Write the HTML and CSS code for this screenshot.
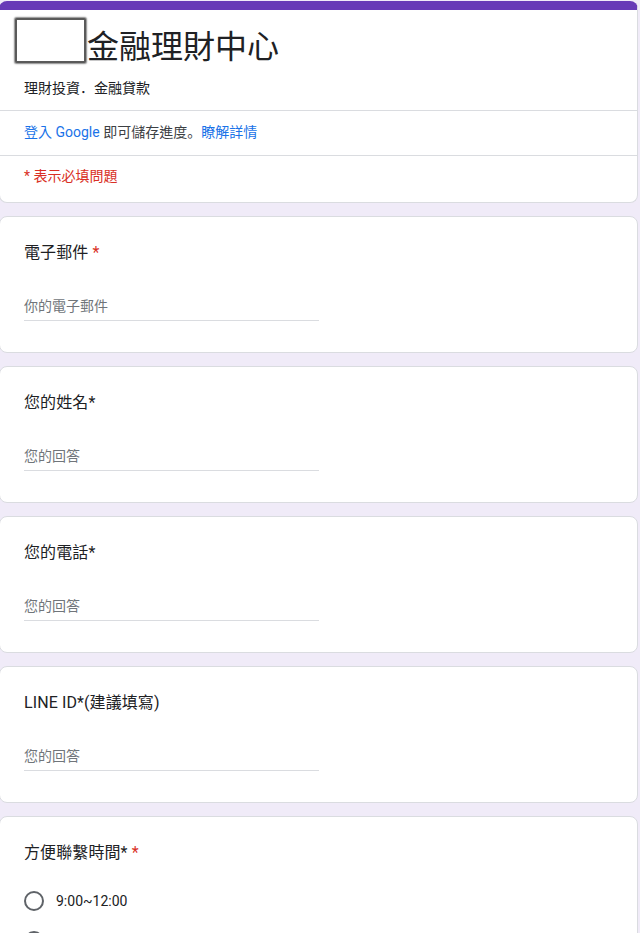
FILE: index.html
```html
<!DOCTYPE html>
<html lang="zh-Hant">
<head>
<meta charset="utf-8">
<title>金融理財中心</title>
<link rel="stylesheet" href="styles.css">
</head>
<body>
<div class="page">
  <div class="card head">
    <div class="head-main">
      <div class="title-row">
        <div class="logo"></div>
        <h1 class="title">金融理財中心</h1>
      </div>
      <div class="desc">理財投資<span class="jp" lang="ja">．</span>金融貸款</div>
    </div>
    <div class="head-row login"><a class="link">登入 Google</a> 即可儲存進度<span class="jp" lang="ja">。</span><a class="link">瞭解詳情</a></div>
    <div class="head-row req">* 表示必填問題</div>
  </div>

  <div class="card q">
    <div class="q-title">電子郵件 <span class="star">*</span></div>
    <div class="answer">你的電子郵件</div>
  </div>

  <div class="card q">
    <div class="q-title">您的姓名*</div>
    <div class="answer">您的回答</div>
  </div>

  <div class="card q">
    <div class="q-title">您的電話*</div>
    <div class="answer">您的回答</div>
  </div>

  <div class="card q">
    <div class="q-title">LINE ID*(建議填寫)</div>
    <div class="answer">您的回答</div>
  </div>

  <div class="card q">
    <div class="q-title">方便聯繫時間* <span class="star">*</span></div>
    <div class="options">
      <div class="opt"><span class="radio"></span><span class="opt-label">9:00~12:00</span></div>
      <div class="opt"><span class="radio"></span><span class="opt-label">12:00~15:00</span></div>
      <div class="opt"><span class="radio"></span><span class="opt-label">15:00~18:00</span></div>
    </div>
  </div>
</div>
</body>
</html>
```

FILE: styles.css
```css
html, body {
  margin: 0;
  padding: 0;
  background: #f0ebf8;
}
body {
  font-family: Roboto, "Noto Sans CJK TC", Arial, sans-serif;
  color: #202124;
  overflow: hidden;
}
.page {
  width: 639px;
  margin-left: -1px;
  padding-top: 1px;
  display: flex;
  flex-direction: column;
  gap: 13px;
}
.card {
  background: #fff;
  border: 1px solid #dadce0;
  border-radius: 8px;
}
.head {
  border-top: 9px solid #673ab7;
}
.head-main {
  padding: 8px 24px 13px 0;
  border-bottom: 1px solid #dadce0;
}
.title-row {
  display: flex;
  align-items: center;
}
.logo {
  width: 67px;
  height: 41px;
  margin-left: 15px;
  border: 2px solid #5a5a5a;
  border-radius: 2px;
  box-shadow: 0 0 1.5px 0.5px #8a8a8a;
  background: #fff;
  flex: none;
}
.title {
  margin: 0 0 0 1px;
  font-size: 32px;
  font-weight: 400;
  line-height: 44px;
  position: relative;
  top: 3px;
  color: #202124;
  font-family: "Noto Sans CJK TC", sans-serif;
}
.desc {
  margin-top: 14px;
  padding-left: 24px;
  font-size: 14px;
  line-height: 20px;
  color: #202124;
  font-family: "Noto Sans CJK TC", sans-serif;
}
.jp {
  font-family: "Noto Sans CJK JP", sans-serif;
}
.head-row {
  padding: 10px 24px 13px;
  font-size: 14px;
  line-height: 20px;
}
.login {
  border-bottom: 1px solid #dadce0;
  color: #3c4043;
}
.link {
  color: #1a73e8;
  text-decoration: none;
}
.req {
  color: #d93025;
  padding-bottom: 16px;
}
.q {
  padding: 24px;
}
.q-title {
  font-size: 16px;
  line-height: 24px;
  letter-spacing: 0.1px;
}
.star {
  color: #d93025;
}
.answer {
  margin-top: 31px;
  margin-bottom: 7px;
  width: 295px;
  font-size: 14px;
  line-height: 20px;
  padding-bottom: 4px;
  border-bottom: 1px solid #dadce0;
  color: #70757a;
}
.options {
  margin-top: 26px;
  display: flex;
  flex-direction: column;
  gap: 20px;
}
.opt {
  display: flex;
  align-items: center;
  gap: 12px;
  height: 20px;
}
.radio {
  width: 16px;
  height: 16px;
  border: 2px solid #5f6368;
  border-radius: 50%;
  flex: none;
}
.opt-label {
  font-size: 14px;
  line-height: 20px;
  color: #202124;
}
```
